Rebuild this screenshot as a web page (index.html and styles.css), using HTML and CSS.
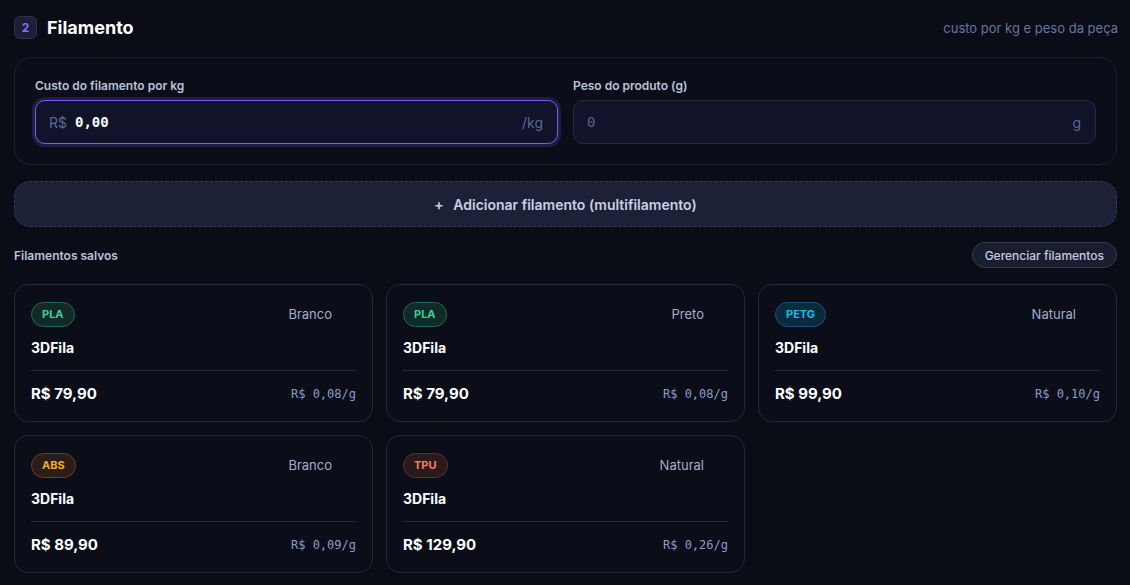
FILE: index.html
```html
<!DOCTYPE html>
<html lang="pt-BR">

<head>
  <meta charset="UTF-8">
  <meta name="viewport" content="width=device-width, initial-scale=1.0">
  <title>Filamento</title>
  <link rel="stylesheet" href="styles.css">
</head>

<body>
  <section class="step">
    <header class="step-head">
      <div class="step-title">
        <span class="step-num">2</span>
        <h2>Filamento</h2>
      </div>
      <span class="step-hint">custo por kg e peso da peça</span>
    </header>

    <div class="panel">
      <div class="field">
        <label for="cost">Custo do filamento por kg</label>
        <div class="input-box focused">
          <span class="prefix">R$</span>
          <input type="text" id="cost" value="0,00">
          <span class="suffix">/kg</span>
        </div>
      </div>
      <div class="field">
        <label for="weight">Peso do produto (g)</label>
        <div class="input-box">
          <input type="text" id="weight" placeholder="0">
          <span class="suffix">g</span>
        </div>
      </div>
    </div>

    <button class="add-btn"><span class="plus">+</span> Adicionar filamento (multifilamento)</button>

    <div class="saved-head">
      <span class="saved-title">Filamentos salvos</span>
      <button class="manage-btn">Gerenciar filamentos</button>
    </div>

    <div class="cards">
      <div class="card">
        <div class="card-top">
          <span class="tag tag-pla">PLA</span>
          <span class="color">Branco</span>
        </div>
        <div class="brand">3DFila</div>
        <div class="card-bottom">
          <span class="price">R$ 79,90</span>
          <span class="per-g">R$ 0,08/g</span>
        </div>
      </div>
      <div class="card">
        <div class="card-top">
          <span class="tag tag-pla">PLA</span>
          <span class="color">Preto</span>
        </div>
        <div class="brand">3DFila</div>
        <div class="card-bottom">
          <span class="price">R$ 79,90</span>
          <span class="per-g">R$ 0,08/g</span>
        </div>
      </div>
      <div class="card">
        <div class="card-top">
          <span class="tag tag-petg">PETG</span>
          <span class="color">Natural</span>
        </div>
        <div class="brand">3DFila</div>
        <div class="card-bottom">
          <span class="price">R$ 99,90</span>
          <span class="per-g">R$ 0,10/g</span>
        </div>
      </div>
      <div class="card">
        <div class="card-top">
          <span class="tag tag-abs">ABS</span>
          <span class="color">Branco</span>
        </div>
        <div class="brand">3DFila</div>
        <div class="card-bottom">
          <span class="price">R$ 89,90</span>
          <span class="per-g">R$ 0,09/g</span>
        </div>
      </div>
      <div class="card">
        <div class="card-top">
          <span class="tag tag-tpu">TPU</span>
          <span class="color">Natural</span>
        </div>
        <div class="brand">3DFila</div>
        <div class="card-bottom">
          <span class="price">R$ 129,90</span>
          <span class="per-g">R$ 0,26/g</span>
        </div>
      </div>
    </div>
  </section>
</body>

</html>
```

FILE: styles.css
```css
* {
  box-sizing: border-box;
}

body {
  margin: 0;
  background-color: #0a0c16;
  color: #e8ecf6;
  font-family: Inter, "Noto Sans", sans-serif;
}

.step {
  padding: 15px 13px 0 14px;
}

.step-head {
  display: flex;
  justify-content: space-between;
  align-items: center;
  height: 25px;
  margin-bottom: 17px;
}

.step-title {
  display: flex;
  align-items: center;
  gap: 10px;
}

.step-num {
  width: 23px;
  height: 23px;
  border-radius: 6px;
  background-color: #1c1f38;
  border: 1px solid #2c3152;
  color: #8b6cf6;
  font-size: 12px;
  font-weight: 700;
  display: flex;
  align-items: center;
  justify-content: center;
}

.step-title h2 {
  margin: 0;
  font-size: 18px;
  font-weight: 700;
  color: #ffffff;
}

.step-hint {
  font-size: 13px;
  color: #6775a0;
  margin-right: -1px;
}

.panel {
  display: grid;
  grid-template-columns: 1fr 1fr;
  gap: 15px;
  padding: 20px;
  border: 1px solid #1d2132;
  border-radius: 16px;
  background-color: #0b0e19;
}

.field label {
  display: block;
  font-size: 12px;
  font-weight: 600;
  color: #b9c3da;
  margin-bottom: 7px;
  line-height: 15px;
}

.input-box {
  display: flex;
  align-items: center;
  height: 44px;
  padding: 0 14px 0 13px;
  border: 1px solid #262a3e;
  border-radius: 10px;
  background-color: #10132a;
}

.input-box.focused {
  border-color: #7a5ce8;
  box-shadow: 0 0 0 3px rgba(110, 80, 220, 0.22);
}

.input-box input {
  flex: 1;
  min-width: 0;
  background: transparent;
  border: none;
  outline: none;
  color: #ffffff;
  font-family: "DejaVu Sans Mono", monospace;
  font-size: 14px;
  font-weight: 700;
  padding: 0;
}

.input-box input::placeholder {
  color: #5a6385;
  font-weight: 400;
}

.prefix {
  color: #5e6991;
  font-size: 14px;
  margin-right: 8px;
}

.suffix {
  color: #5e6991;
  font-size: 14px;
}

.add-btn {
  display: block;
  width: 100%;
  height: 46px;
  margin-top: 16px;
  border: 1px dashed #363b56;
  border-radius: 16px;
  background-color: #1d2137;
  color: #c9d0e6;
  font-family: Inter, "Noto Sans", sans-serif;
  font-size: 14px;
  font-weight: 600;
  cursor: pointer;
}

.add-btn .plus {
  margin-right: 6px;
}

.saved-head {
  display: flex;
  justify-content: space-between;
  align-items: center;
  margin-top: 15px;
  height: 26px;
}

.saved-title {
  font-size: 12px;
  font-weight: 600;
  color: #b9c3da;
}

.manage-btn {
  height: 26px;
  padding: 0 12px;
  border: 1px solid #353a52;
  border-radius: 13px;
  background-color: #1a1d2e;
  color: #c4cbe0;
  font-family: Inter, "Noto Sans", sans-serif;
  font-size: 12px;
  font-weight: 500;
  cursor: pointer;
}

.cards {
  display: grid;
  grid-template-columns: repeat(3, 1fr);
  gap: 13px;
  margin-top: 16px;
}

.card {
  height: 138px;
  padding: 16px 16px 0 16px;
  border: 1px solid #24283a;
  border-radius: 14px;
  background-color: #0b0d18;
}

.card-top {
  display: flex;
  justify-content: space-between;
  align-items: center;
  height: 26px;
}

.tag {
  height: 25px;
  padding: 0 10px;
  border-radius: 13px;
  border: 1px solid;
  font-size: 11px;
  font-weight: 700;
  display: flex;
  align-items: center;
}

.tag-pla {
  color: #34d399;
  background-color: #112a27;
  border-color: #1f6a52;
}

.tag-petg {
  color: #22b8e8;
  background-color: #0c2a3e;
  border-color: #1c507a;
}

.tag-abs {
  color: #f0ad2c;
  background-color: #2b1d17;
  border-color: #6e3f1c;
}

.tag-tpu {
  color: #fb7a6c;
  background-color: #2a1a1c;
  border-color: #5c3030;
}

.color {
  font-size: 13px;
  color: #a3aec8;
  margin-right: 24px;
}

.brand {
  margin-top: 12px;
  font-size: 14px;
  font-weight: 700;
  color: #ffffff;
  height: 17px;
}

.card-bottom {
  display: flex;
  justify-content: space-between;
  align-items: center;
  margin-top: 14px;
  padding-top: 13px;
  border-top: 1px solid #23273a;
}

.price {
  font-size: 15px;
  font-weight: 700;
  color: #ffffff;
}

.per-g {
  font-family: "DejaVu Sans Mono", monospace;
  font-size: 12px;
  color: #8a9cc8;
}
```
